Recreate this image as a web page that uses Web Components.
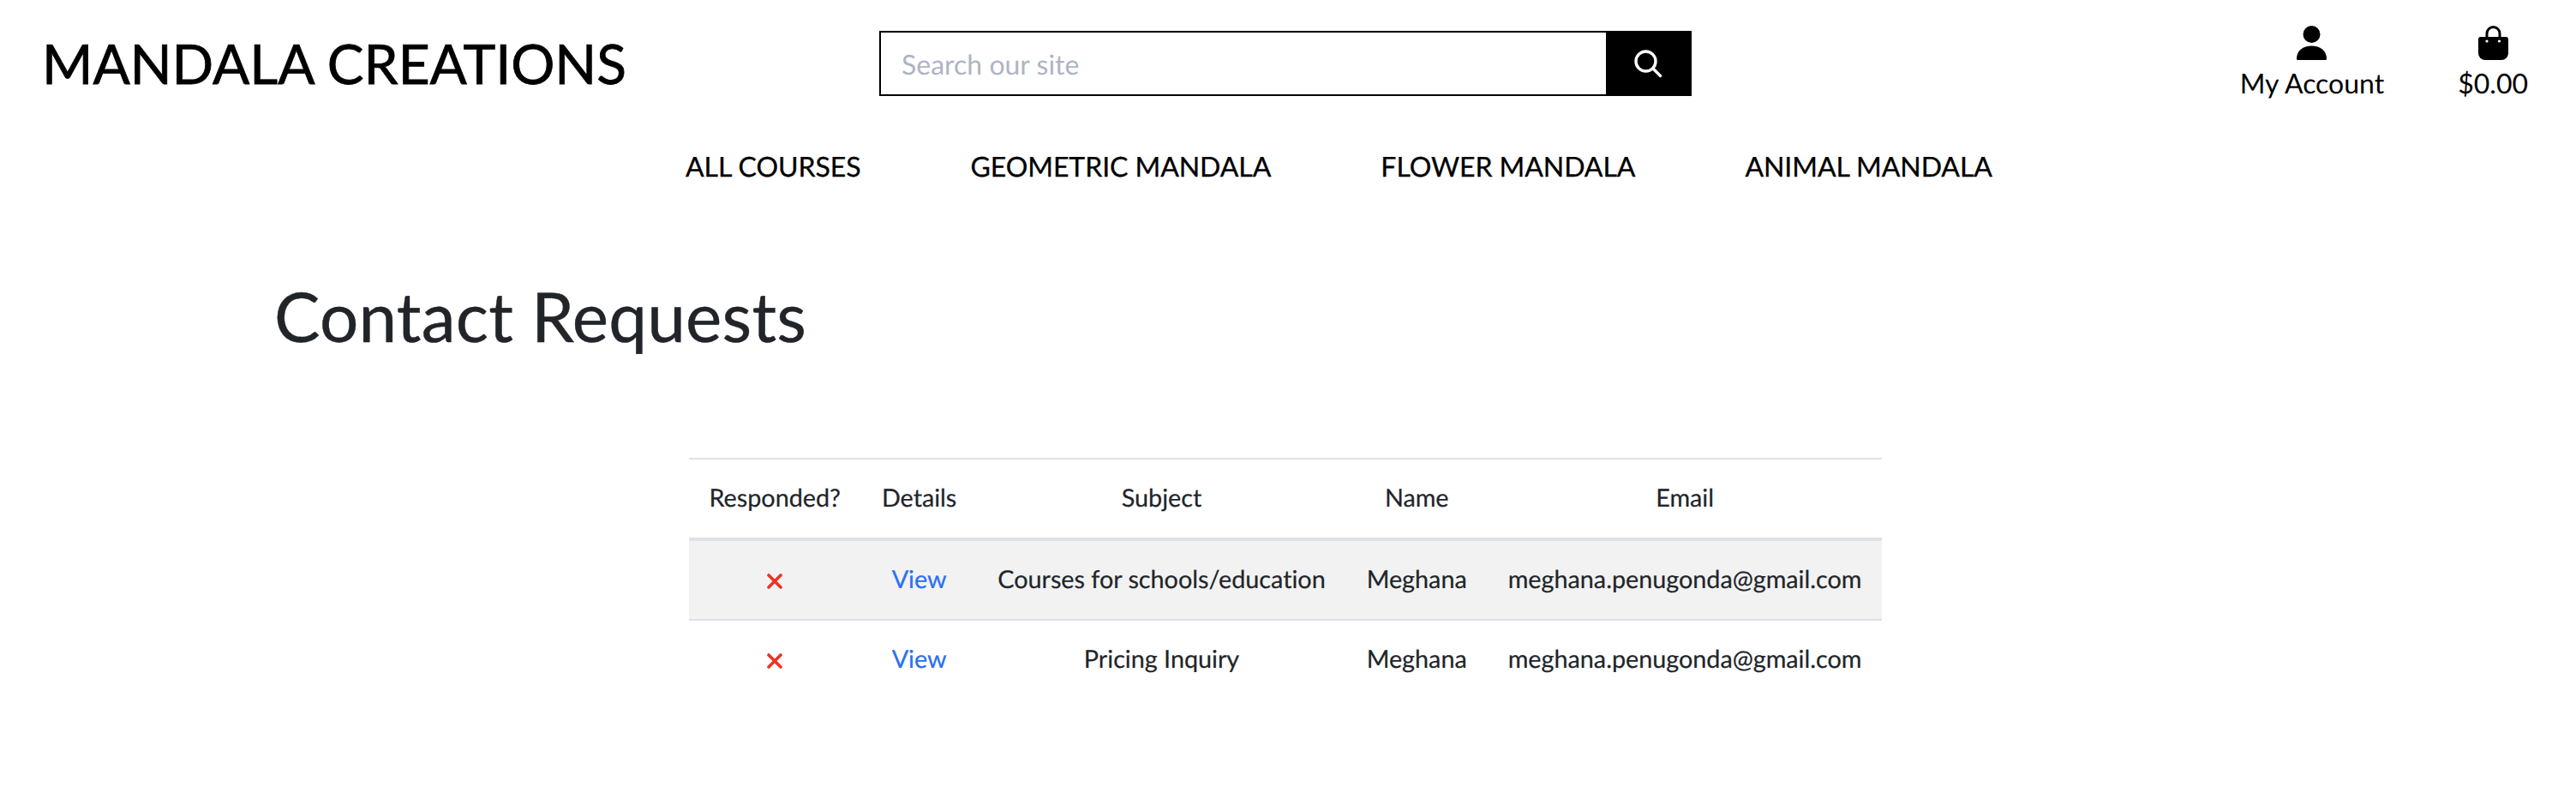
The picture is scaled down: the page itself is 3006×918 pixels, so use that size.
<!DOCTYPE html>
<html lang="en">
<head>
<meta charset="utf-8">
<title>Contact Requests</title>
<style>
    html, body { margin: 0; background: #fff; }
    body {
        font-family: Lato, "Liberation Sans", sans-serif;
        color: #212529;
        text-rendering: geometricPrecision;
    }
</style>
</head>
<body>
<site-header>
    <search-box slot="search" placeholder="Search our site"></search-box>
    <account-link slot="links" icon="user" label="My Account"></account-link>
    <account-link slot="links" icon="bag" label="$0.00"></account-link>
</site-header>
<main-nav>
    <nav-item>ALL COURSES</nav-item>
    <nav-item>GEOMETRIC MANDALA</nav-item>
    <nav-item>FLOWER MANDALA</nav-item>
    <nav-item>ANIMAL MANDALA</nav-item>
</main-nav>
<page-title>Contact Requests</page-title>
<table-wrap>
    <request-table>
        <request-head></request-head>
        <request-row striped subject="Courses for schools/education" name="Meghana" email="meghana.penugonda@gmail.com"></request-row>
        <request-row subject="Pricing Inquiry" name="Meghana" email="meghana.penugonda@gmail.com"></request-row>
    </request-table>
</table-wrap>

<script>
class SiteHeader extends HTMLElement {
    constructor() {
        super();
        this.attachShadow({mode: 'open'});
    }

    connectedCallback() {
        this.shadowRoot.innerHTML = `
            <style>
                :host {
                    display: grid;
                    grid-template-columns: 1fr 948px 1fr;
                    align-items: start;
                    padding: 36px 55px 0 49px;
                    height: 139px;
                    color: #000;
                }
                .logo {
                    font-size: 64px;
                    line-height: 76px;
                    white-space: nowrap;
                    -webkit-text-stroke: 0.8px #000;
                }
                .links {
                    display: flex;
                    justify-content: flex-end;
                    gap: 86px;
                    margin-top: -6px;
                    margin-right: 1px;
                }
            </style>
            <div class="logo">MANDALA CREATIONS</div>
            <slot name="search"></slot>
            <div class="links"><slot name="links"></slot></div>
        `;
    }
}

class SearchBox extends HTMLElement {
    constructor() {
        super();
        this.attachShadow({mode: 'open'});
    }

    connectedCallback() {
        this.shadowRoot.innerHTML = `
            <style>
                :host {
                    display: flex;
                    height: 76px;
                    box-sizing: border-box;
                    border: 2px solid #000;
                }
                input {
                    flex: 1;
                    min-width: 0;
                    border: 0;
                    outline: 0;
                    padding: 0 24px;
                    font: 32px Lato, sans-serif;
                    text-rendering: geometricPrecision;
                    background: #fff;
                }
                input::placeholder { color: #adb5c4; opacity: 1; }
                button {
                    width: 98px;
                    border: 0;
                    padding: 0;
                    background: #000;
                    display: flex;
                    align-items: center;
                    justify-content: center;
                }
                svg { display: block; }
            </style>
            <input type="text" placeholder="${this.getAttribute('placeholder') || ''}">
            <button type="button" aria-label="Search">
                <svg width="34" height="34" viewBox="0 0 34 34" fill="none" stroke="#fff" stroke-width="3.4" stroke-linecap="round">
                    <circle cx="14.5" cy="14.5" r="11.5"/>
                    <path d="M23 23 L31.5 31.5"/>
                </svg>
            </button>
        `;
    }
}

class AccountLink extends HTMLElement {
    static get icons() {
        return {
            user: `<circle cx="17.5" cy="10" r="10"/><path d="M1.5 40 Q0 40 0 38.5 C0 29 7.5 23.5 17.5 23.5 S35 29 35 38.5 Q35 40 33.5 40 Z"/>`,
            bag: `<path fill-rule="evenodd" d="M8.5 13 V9 A9 9 0 0 1 26.5 9 V13 H32 A3 3 0 0 1 35 16 V32 A8 8 0 0 1 27 40 H8 A8 8 0 0 1 0 32 V16 A3 3 0 0 1 3 13 Z M11.5 13 H23.5 V9 A6 6 0 0 0 11.5 9 Z"/><circle cx="10" cy="18" r="1.6" fill="#fff"/><circle cx="24.5" cy="18" r="1.6" fill="#fff"/>`
        };
    }

    constructor() {
        super();
        this.attachShadow({mode: 'open'});
    }

    connectedCallback() {
        const icon = AccountLink.icons[this.getAttribute('icon')] || '';
        this.shadowRoot.innerHTML = `
            <style>
                :host {
                    display: flex;
                    flex-direction: column;
                    align-items: center;
                    gap: 8px;
                    font-size: 32px;
                    line-height: 38px;
                    color: #000;
                }
                svg { display: block; }
            </style>
            <svg width="35" height="40" viewBox="0 0 35 40" fill="#000">${icon}</svg>
            <span>${this.getAttribute('label') || ''}</span>
        `;
    }
}

class MainNav extends HTMLElement {
    constructor() {
        super();
        this.attachShadow({mode: 'open'});
    }

    connectedCallback() {
        this.shadowRoot.innerHTML = `
            <style>
                :host {
                    display: flex;
                    gap: 128px;
                    padding-left: 800px;
                    height: 38px;
                    color: #000;
                }
            </style>
            <slot></slot>
        `;
    }
}

class NavItem extends HTMLElement {
    constructor() {
        super();
        this.attachShadow({mode: 'open'});
    }

    connectedCallback() {
        this.shadowRoot.innerHTML = `
            <style>
                :host {
                    display: block;
                    font-size: 32px;
                    line-height: 38px;
                    letter-spacing: -0.06px;
                    white-space: nowrap;
                    -webkit-text-stroke: 0.3px #000;
                }
            </style>
            <slot></slot>
        `;
    }
}

class PageTitle extends HTMLElement {
    constructor() {
        super();
        this.attachShadow({mode: 'open'});
    }

    connectedCallback() {
        this.shadowRoot.innerHTML = `
            <style>
                :host {
                    display: block;
                    padding: 108px 0 0 320px;
                    font-size: 80px;
                    line-height: 96px;
                    letter-spacing: 0.25px;
                    height: 213px;
                    color: #212529;
                    -webkit-text-stroke: 0.4px #212529;
                }
            </style>
            <slot></slot>
        `;
    }
}

class TableWrap extends HTMLElement {
    constructor() {
        super();
        this.attachShadow({mode: 'open'});
    }

    connectedCallback() {
        this.shadowRoot.innerHTML = `
            <style>
                :host {
                    display: flex;
                    justify-content: center;
                    padding-right: 6px;
                }
            </style>
            <slot></slot>
        `;
    }
}

class RequestTable extends HTMLElement {
    constructor() {
        super();
        this.attachShadow({mode: 'open'});
    }

    connectedCallback() {
        this.shadowRoot.innerHTML = `
            <style>
                :host {
                    display: table;
                    border-collapse: collapse;
                    font-size: 28.8px;
                    line-height: 43.2px;
                    letter-spacing: -0.03px;
                    text-align: center;
                    color: #212529;
                    -webkit-text-stroke: 0.2px;
                }
            </style>
            <slot></slot>
        `;
    }
}

const cellStyles = `
    .cell {
        display: table-cell;
        padding: 24px;
        vertical-align: middle;
        white-space: nowrap;
        border-top: 2px solid #dee2e6;
    }
`;

class RequestHead extends HTMLElement {
    constructor() {
        super();
        this.attachShadow({mode: 'open'});
    }

    connectedCallback() {
        const titles = ['Responded?', 'Details', 'Subject', 'Name', 'Email'];
        this.shadowRoot.innerHTML = `
            <style>
                :host { display: table-row; }
                ${cellStyles}
                .cell { border-bottom: 4px solid #dee2e6; }
            </style>
            ${titles.map(t => `<div class="cell">${t}</div>`).join('')}
        `;
    }
}

class RequestRow extends HTMLElement {
    constructor() {
        super();
        this.attachShadow({mode: 'open'});
    }

    connectedCallback() {
        this.shadowRoot.innerHTML = `
            <style>
                :host { display: table-row; }
                :host([striped]) { background: #f2f2f2; }
                ${cellStyles}
                :host([striped]) .cell { border-top: 0; }
                a { color: #2b6ff2; text-decoration: none; }
                svg { vertical-align: -1px; }
            </style>
            <div class="cell">
                <svg width="18" height="18" viewBox="0 0 18 18" fill="none" stroke="#ee3322" stroke-width="3.6" stroke-linecap="round">
                    <path d="M2 2 L16 16 M16 2 L2 16"/>
                </svg>
            </div>
            <div class="cell"><a href="#">View</a></div>
            <div class="cell">${this.getAttribute('subject')}</div>
            <div class="cell">${this.getAttribute('name')}</div>
            <div class="cell">${this.getAttribute('email')}</div>
        `;
    }
}

window.customElements.define('site-header', SiteHeader);
window.customElements.define('search-box', SearchBox);
window.customElements.define('account-link', AccountLink);
window.customElements.define('main-nav', MainNav);
window.customElements.define('nav-item', NavItem);
window.customElements.define('page-title', PageTitle);
window.customElements.define('table-wrap', TableWrap);
window.customElements.define('request-table', RequestTable);
window.customElements.define('request-head', RequestHead);
window.customElements.define('request-row', RequestRow);
</script>
</body>
</html>
